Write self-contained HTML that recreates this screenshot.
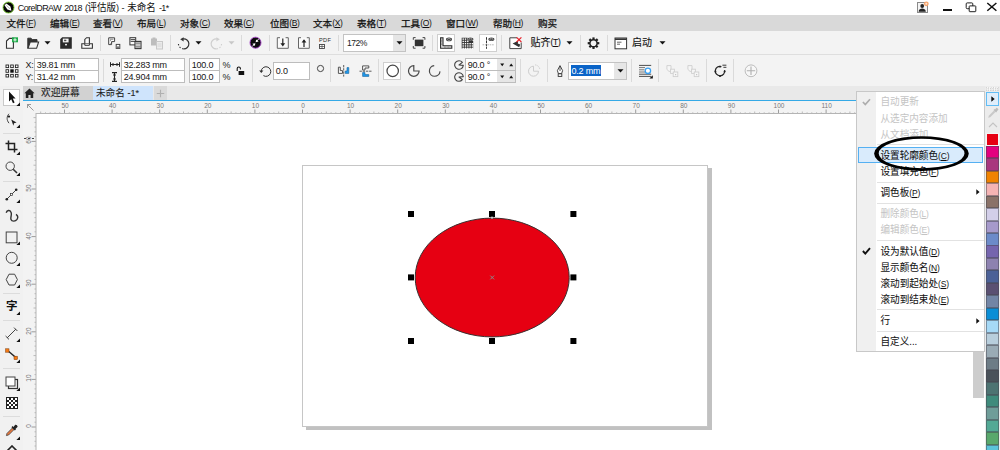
<!DOCTYPE html>
<html lang="zh-CN">
<head>
<meta charset="utf-8">
<title>CorelDRAW 2018</title>
<style>
*{box-sizing:border-box;margin:0;padding:0}
html,body{width:1000px;height:450px;overflow:hidden;background:#fff}
body{position:relative;font-family:"Liberation Sans","Noto Sans CJK SC",sans-serif;font-size:10px;color:#111;line-height:1}
.abs{position:absolute}
.t{position:absolute;white-space:nowrap;line-height:1}
#titlebar{left:0;top:0;width:1000px;height:15px;background:#fff}
#menubar{left:0;top:15px;width:1000px;height:16px;background:#d9d9d9}
#toolbar{left:0;top:31px;width:1000px;height:24px;background:#f3f3f3;border-bottom:1px solid #dedede}
#propbar{left:0;top:55px;width:1000px;height:31px;background:#f3f3f3}
#tabbar{left:0;top:86px;width:1000px;height:15px;background:#e9e9e9}
#toolbox{left:0;top:86px;width:23px;height:364px;background:#f1f1f1}
#hruler{left:23px;top:101px;width:963px;height:12px;background:#f3f3f3}
#vruler{left:23px;top:101px;width:13px;height:349px;background:#f3f3f3}
#canvas{left:36px;top:113px;width:951px;height:338px;background:#fff}
.cj{font-size:9.5px;letter-spacing:0}
.mi{position:absolute;top:18.6px;margin-left:0;-webkit-text-stroke:.25px #111;font-size:9.6px;white-space:nowrap;line-height:1}
.mi u{-webkit-text-stroke:0;font-size:8.5px;text-decoration:none;letter-spacing:-0.3px;position:relative;top:-.3px}
.mi u b{font-weight:normal;text-decoration:underline}
.sep{position:absolute;width:1px;background:#dadada}
.inp{position:absolute;background:#fff;border:1px solid #bdbdbd;font-size:10px;line-height:1;white-space:nowrap;color:#222}
.inp span{position:absolute;left:1.7px;top:1.7px;font-size:9px;letter-spacing:-.2px;color:#151515}
.pl{font-size:9px;color:#1a1a1a;letter-spacing:-.2px}
.rn{position:absolute;top:102.8px;font-size:6.5px;color:#777;width:20px;text-align:center;line-height:1}
.vn{position:absolute;left:26.1px;font-size:6.5px;color:#777;width:20px;height:8px;text-align:center;line-height:1;transform-origin:0 0;transform:rotate(-90deg)}
.hd{position:absolute;width:5px;height:5px;background:#000}
.cm{position:absolute;left:880.5px;margin-top:1.2px;transform:scaleY(1.06);transform-origin:0 100%;font-size:9.6px;white-space:nowrap;line-height:1;color:#111}
.cm{-webkit-text-stroke:.06px #111}
.cm.dis{color:#c4c4c4;-webkit-text-stroke:0}
.cm u{-webkit-text-stroke:0}
.cm u{font-size:8.5px;text-decoration:none;letter-spacing:-.2px;position:relative;top:-.3px}
.cm u b{font-weight:normal;text-decoration:underline}
.cms{position:absolute;left:877px;width:107px;height:1px;background:#e2e2e2}
.sw{position:absolute;left:986.4px;width:12.4px;border:1px solid rgba(70,70,80,.5);border-top-width:.6px;border-bottom-width:.6px}
.sw.first{border-color:#f4f4f4}
</style>
</head>
<body>
<div class="abs" id="titlebar"></div>
<div class="abs" id="menubar"></div>
<div class="abs" id="toolbar"></div>
<div class="abs" id="propbar"></div>
<div class="abs" id="tabbar"></div>
<div class="abs" id="hruler"></div>
<div class="abs" id="vruler"></div>
<div class="abs" id="canvas"></div>
<div class="abs" id="toolbox"></div>

<!-- TITLE -->
<svg class="abs" style="left:1.6px;top:.7px" width="13" height="13" viewBox="0 0 13 13"><circle cx="6.5" cy="6.5" r="5.5" fill="#050505" stroke="#7bd02c" stroke-width=".9"/><path d="M2.5 4.3 L4.4 2.5 L8.4 5.6 L9.4 9.7 L5.4 8.5 Z" fill="#fff"/><path d="M4.4 4.4 L8 7.8" stroke="#999" stroke-width=".7"/></svg>
<div class="t" id="title" style="left:17.8px;top:2.5px;transform:scaleY(1.1);transform-origin:0 90%;font-size:9px;letter-spacing:-0.6px;word-spacing:1.3px">CorelDRAW 2018 (<span class="cj">评估版</span>) - <span class="cj">未命名</span> -1*</div>


<!-- window controls -->
<svg class="abs" style="left:916px;top:1px" width="14" height="13" viewBox="0 0 14 13"><rect x="1.5" y="1.5" width="10" height="10" fill="#f4f4f4" stroke="#8a8a8a" stroke-width="1"/><circle cx="6.2" cy="5" r="1.9" fill="#222"/><path d="M2.6 10.8 C2.8 8.2 4.6 7.6 6.2 7.6 C7.8 7.6 9.6 8.2 9.8 10.8 Z" fill="#222"/><circle cx="10.3" cy="2.8" r="2.4" fill="#f6a46c"/><circle cx="10.3" cy="2.8" r="1" fill="#fde3cf"/></svg>
<div class="abs" style="left:943px;top:8.5px;width:8.5px;height:2.2px;background:#111"></div>
<svg class="abs" style="left:965px;top:2px" width="12" height="11" viewBox="0 0 12 11"><rect x="1.2" y=".9" width="6.6" height="5.8" rx="1" fill="#fff" stroke="#222" stroke-width="1"/><rect x="4.2" y="3.9" width="6.6" height="5.8" rx=".6" fill="#fff" stroke="#222" stroke-width="1"/></svg>
<svg class="abs" style="left:986px;top:2px" width="12" height="10" viewBox="0 0 12 10"><path d="M1.3 1L10.4 8.8M10.4 1L1.3 8.8" stroke="#111" stroke-width="1.5"/></svg>
<!-- MENU -->
<div class="mi" style="left:6.5px">文件<u>(<b>F</b>)</u></div>
<div class="mi" style="left:50px">编辑<u>(<b>E</b>)</u></div>
<div class="mi" style="left:93px">查看<u>(<b>V</b>)</u></div>
<div class="mi" style="left:137px">布局<u>(<b>L</b>)</u></div>
<div class="mi" style="left:180px">对象<u>(<b>C</b>)</u></div>
<div class="mi" style="left:224px">效果<u>(<b>C</b>)</u></div>
<div class="mi" style="left:270px">位图<u>(<b>B</b>)</u></div>
<div class="mi" style="left:313px">文本<u>(<b>X</b>)</u></div>
<div class="mi" style="left:357px">表格<u>(<b>T</b>)</u></div>
<div class="mi" style="left:401px">工具<u>(<b>O</b>)</u></div>
<div class="mi" style="left:446px">窗口<u>(<b>W</b>)</u></div>
<div class="mi" style="left:493px">帮助<u>(<b>H</b>)</u></div>
<div class="mi" style="left:538px">购买</div>

<!-- TOOLBAR_ICONS -->
<!-- new -->
<svg class="abs" style="left:5px;top:37px" width="14" height="13" viewBox="0 0 14 13"><path d="M1.5 4 L4.4 1.4 H8.4 V11.3 H1.5 Z" fill="#fafafa" stroke="#333" stroke-width="1.1"/><rect x="7" y=".3" width="6" height="5" fill="#1fa84a"/><path d="M10 1.2v3.2M8.4 2.8h3.2" stroke="#d8f0dc" stroke-width="1.2"/></svg>
<!-- open -->
<svg class="abs" style="left:26px;top:37px" width="14" height="13" viewBox="0 0 14 13"><path d="M1.8 11.3 V1.2 H5 L6.3 2.6 H11 V5" fill="#333" stroke="#333" stroke-width="1"/><path d="M2 11.3 L4.2 5 H12.6 L10.6 11.3 Z" fill="#f6f6f6" stroke="#333" stroke-width="1.1"/></svg>
<svg class="abs" style="left:44px;top:41px" width="7" height="4" viewBox="0 0 7 4"><path d="M.5 .3 H6.5 L3.5 3.6 Z" fill="#111"/></svg>
<!-- save -->
<svg class="abs" style="left:60px;top:37px" width="13" height="13" viewBox="0 0 13 13"><path d="M2.2 .3 H11.8 V11.8 H.2 V2.3 Z" fill="#2b2b2b"/><rect x="2.8" y="1.6" width="5.8" height="3.8" fill="#f3f3f3"/><path d="M4.2 3.4H6.4M5 2.6V4.4" stroke="#2b2b2b" stroke-width=".8"/><rect x="5.1" y="6.9" width="1.8" height="1.5" fill="#f3f3f3"/></svg>
<!-- print -->
<svg class="abs" style="left:80px;top:37px" width="14" height="13" viewBox="0 0 14 13"><path d="M4.8 7 V2.4 L6.6 .7 H9.4 V7" fill="#fafafa" stroke="#333" stroke-width="1.1"/><path d="M1.8 6.8 H12.4 V11.3 H1.8 Z" fill="#fafafa" stroke="#333" stroke-width="1.1"/><path d="M4.8 6.8V8.3H9.4V6.8" fill="#f3f3f3" stroke="#333" stroke-width="1"/></svg>
<div class="sep" style="left:100px;top:35px;height:16px"></div>
<!-- cut -->
<svg class="abs" style="left:107px;top:37px" width="14" height="13" viewBox="0 0 14 13"><path d="M1.7 .8 H7.6 V4.6 H4.6 V7.6 H1.7 Z" fill="#fafafa" stroke="#444" stroke-width="1"/><path d="M3 2.3h3.4M3 3.6h1" stroke="#777" stroke-width=".8"/><path d="M3.6 6.6L4.6 5.6" stroke="#444" stroke-width=".8"/><rect x="9.2" y="7.4" width="3.6" height="4" fill="#fafafa" stroke="#444" stroke-width="1"/><rect x="10" y="9.4" width="2" height="1.6" fill="#777"/></svg>
<!-- copy -->
<svg class="abs" style="left:128px;top:37px" width="14" height="13" viewBox="0 0 14 13"><rect x="1.9" y=".7" width="5.8" height="7.2" fill="#fafafa" stroke="#333" stroke-width="1"/><path d="M2.6 2.6h4.4M2.6 4.4h4.4" stroke="#444" stroke-width="1"/><rect x="7" y="4.4" width="6" height="7.2" fill="#fafafa" stroke="#333" stroke-width="1.1"/><path d="M7.6 6.2h5M7.6 9.8h5M9 5v6.4M11 5v6.4" stroke="#666" stroke-width=".7"/></svg>
<!-- paste disabled -->
<svg class="abs" style="left:150px;top:37px" width="14" height="13" viewBox="0 0 14 13"><rect x="1" y="1.5" width="6" height="7" fill="#bdbdbd"/><rect x="2.5" y=".5" width="3" height="2" fill="#bdbdbd"/><rect x="6.5" y="4.5" width="6" height="7.5" fill="#ececec" stroke="#c8c8c8" stroke-width="1"/><path d="M7.5 7h4M7.5 9h4" stroke="#d0d0d0" stroke-width=".8"/></svg>
<div class="sep" style="left:170px;top:35px;height:16px"></div>
<!-- undo -->
<svg class="abs" style="left:177px;top:37px" width="13" height="13" viewBox="0 0 13 13"><path d="M6 1.9 A5 5 0 1 1 6.4 11.8" fill="none" stroke="#333" stroke-width="1.2"/><path d="M6.4 11.8 A5 5 0 0 1 1.6 5.6" fill="none" stroke="#333" stroke-width="1.1" stroke-dasharray="1.3 1.7"/><path d="M3.2 2.3 L6.6 .2 V4.6 Z" fill="#333"/></svg>
<svg class="abs" style="left:195px;top:41px" width="7" height="4" viewBox="0 0 7 4"><path d="M.5 .3 H6.5 L3.5 3.6 Z" fill="#111"/></svg>
<!-- redo disabled -->
<svg class="abs" style="left:210px;top:37px" width="13" height="13" viewBox="0 0 13 13"><path d="M7 1.9 A5 5 0 1 0 6.6 11.8" fill="none" stroke="#cfcfcf" stroke-width="1.2"/><path d="M6.6 11.8 A5 5 0 0 0 11.4 5.6" fill="none" stroke="#cfcfcf" stroke-width="1.1" stroke-dasharray="1.3 1.7"/><path d="M9.8 2.3 L6.4 .2 V4.6 Z" fill="#cfcfcf"/></svg>
<svg class="abs" style="left:228px;top:41px" width="7" height="4" viewBox="0 0 7 4"><path d="M.5 .3 H6.5 L3.5 3.6 Z" fill="#c8c8c8"/></svg>
<div class="sep" style="left:241px;top:35px;height:16px"></div>
<!-- search content -->
<svg class="abs" style="left:249px;top:36px" width="13" height="13" viewBox="0 0 13 13"><circle cx="6.5" cy="6.7" r="5.5" fill="#0c0c0c" stroke="#a23cc4" stroke-width=".9"/><path d="M10 3.2 L8.6 4.6 L9.6 5.6 L6.6 6.2 L7.2 3.4 L8 4.2 L9.4 2.8 Z M3 10.2 L4.4 8.8 L3.4 7.8 L6.4 7.2 L5.8 10 L5 9.2 L3.6 10.6 Z" fill="#fff"/></svg>
<div class="sep" style="left:269px;top:35px;height:16px"></div>
<!-- import -->
<svg class="abs" style="left:276px;top:37px" width="14" height="13" viewBox="0 0 14 13"><path d="M4 .7 H1.3 V11.3 H12.3 V.7 H9.6" fill="#fafafa" stroke="#666" stroke-width="1"/><path d="M6.8 1.5 V8" stroke="#222" stroke-width="1.2"/><path d="M4.4 6.2 H9.2 L6.8 9.4 Z" fill="#222"/></svg>
<!-- export -->
<svg class="abs" style="left:297px;top:37px" width="14" height="13" viewBox="0 0 14 13"><path d="M4 .7 H1.5 V11.3 H12.3 V.7 H9.8" fill="#fafafa" stroke="#666" stroke-width="1"/><path d="M7 10 V3.6" stroke="#222" stroke-width="1.2"/><path d="M4.6 5.6 H9.4 L7 2.2 Z" fill="#222"/></svg>
<!-- pdf -->
<div class="t" style="left:319px;top:38px;font-size:5.6px;color:#2a2a2a;letter-spacing:.35px">PDF</div>
<svg class="abs" style="left:319px;top:44px" width="6" height="5" viewBox="0 0 6 5"><rect x=".5" y=".5" width="5" height="4" fill="#fff" stroke="#444" stroke-width=".9"/><path d="M3 .5v4M.5 2.5h5" stroke="#444" stroke-width=".7"/></svg>
<div class="sep" style="left:338px;top:35px;height:16px"></div>
<!-- zoom combo -->
<div class="abs" style="left:343px;top:34px;width:63px;height:18px;background:#fff;border:1px solid #c3c3c3"></div>
<div class="abs" style="left:393px;top:35px;width:12px;height:16px;background:#e6e6e6"></div>
<div class="t" style="left:347px;top:39px;font-size:8.6px;letter-spacing:-.5px;color:#222">172%</div>
<svg class="abs" style="left:396px;top:41px" width="7" height="4" viewBox="0 0 7 4"><path d="M.5 .3 H6.5 L3.5 3.6 Z" fill="#111"/></svg>
<!-- fullscreen -->
<svg class="abs" style="left:412px;top:37px" width="14" height="13" viewBox="0 0 14 13"><rect x="2.8" y="2.6" width="8.6" height="6.6" fill="#333"/><path d="M1.3 2.8V.6H3.6 M10.6 .6H12.9V2.8 M12.9 9V11.2H10.6 M3.6 11.2H1.3V9" fill="none" stroke="#444" stroke-width="1"/></svg>
<div class="sep" style="left:432px;top:35px;height:16px"></div>
<!-- rulers btn -->
<div class="abs" style="left:437px;top:34px;width:18px;height:18px;background:#fff;border:1px solid #cfcfcf"></div>
<svg class="abs" style="left:440px;top:37px" width="13" height="13" viewBox="0 0 13 13"><path d="M.6 .8 H3 V8.8 H11.8 V11.3 H.6 Z" fill="#e8e8e8" stroke="#2a2a2a" stroke-width="1.1"/><path d="M4 10.1h7" stroke="#555" stroke-width=".9" stroke-dasharray=".7 .7"/><path d="M1.8 1.6v7" stroke="#555" stroke-width=".9" stroke-dasharray=".7 .7"/><ellipse cx="9" cy="2.4" rx="3" ry="1.8" fill="#3a3a3a"/><ellipse cx="9" cy="2.4" rx="1.7" ry="1" fill="none" stroke="#ddd" stroke-width=".5"/></svg>
<!-- grid -->
<svg class="abs" style="left:461px;top:37px" width="13" height="13" viewBox="0 0 13 13"><path d="M.7 .7H6.6V4H12.2V11.4H.7Z" fill="#333"/><rect x="1.5" y="1.4" width="1.4" height="1.4" fill="#fff"/><rect x="1.5" y="3.7" width="1.4" height="1.4" fill="#fff"/><rect x="1.5" y="6.0" width="1.4" height="1.4" fill="#fff"/><rect x="1.5" y="8.3" width="1.4" height="1.4" fill="#fff"/><rect x="1.5" y="10.6" width="1.4" height="1.4" fill="#fff"/><rect x="3.8" y="1.4" width="1.4" height="1.4" fill="#fff"/><rect x="3.8" y="3.7" width="1.4" height="1.4" fill="#fff"/><rect x="3.8" y="6.0" width="1.4" height="1.4" fill="#fff"/><rect x="3.8" y="8.3" width="1.4" height="1.4" fill="#fff"/><rect x="3.8" y="10.6" width="1.4" height="1.4" fill="#fff"/><rect x="6.1" y="1.4" width="1.4" height="1.4" fill="#fff"/><rect x="6.1" y="3.7" width="1.4" height="1.4" fill="#fff"/><rect x="6.1" y="6.0" width="1.4" height="1.4" fill="#fff"/><rect x="6.1" y="8.3" width="1.4" height="1.4" fill="#fff"/><rect x="6.1" y="10.6" width="1.4" height="1.4" fill="#fff"/><rect x="8.4" y="6.0" width="1.4" height="1.4" fill="#fff"/><rect x="8.4" y="8.3" width="1.4" height="1.4" fill="#fff"/><rect x="8.4" y="10.6" width="1.4" height="1.4" fill="#fff"/><rect x="10.7" y="6.0" width="1.4" height="1.4" fill="#fff"/><rect x="10.7" y="8.3" width="1.4" height="1.4" fill="#fff"/><rect x="10.7" y="10.6" width="1.4" height="1.4" fill="#fff"/><ellipse cx="9.4" cy="2.2" rx="3" ry="1.8" fill="#3a3a3a"/><ellipse cx="9.4" cy="2.2" rx="1.7" ry="1" fill="none" stroke="#ddd" stroke-width=".5"/></svg>
<!-- guidelines btn -->
<div class="abs" style="left:479px;top:34px;width:18px;height:18px;background:#fff;border:1px solid #cfcfcf"></div>
<svg class="abs" style="left:482px;top:37px" width="13" height="13" viewBox="0 0 13 13"><path d="M4.5 .2V11.8" stroke="#333" stroke-width="1" stroke-dasharray="2.6 .7"/><path d="M.5 7.8H12.5" stroke="#b5b5b5" stroke-width="1" stroke-dasharray="1.6 .8"/><ellipse cx="9.4" cy="2.2" rx="3" ry="1.8" fill="#3a3a3a"/><ellipse cx="9.4" cy="2.2" rx="1.7" ry="1" fill="none" stroke="#ddd" stroke-width=".5"/></svg>
<div class="sep" style="left:501px;top:35px;height:16px"></div>
<!-- snap off -->
<svg class="abs" style="left:509px;top:36px" width="14" height="14" viewBox="0 0 14 14"><path d="M8 1.8H.8V12.6H12.2V6.5" fill="#fff" stroke="#444" stroke-width="1"/><path d="M3.6 7.6 L9.2 4.8 L8.8 7.4 L11.2 8.4 L10.2 11.2 Z" fill="#333"/><path d="M7.6 1.4 L12.4 6 M12.4 1.4 L7.6 6" stroke="#e8222a" stroke-width="1.2"/></svg>
<div class="t" style="left:530.5px;top:37.5px;font-size:10px;-webkit-text-stroke:.1px #111">贴齐<span style="font-size:8.5px;letter-spacing:-.3px;position:relative;top:-.4px">(<span style="text-decoration:underline">T</span>)</span></div>
<svg class="abs" style="left:566px;top:41px" width="7" height="4" viewBox="0 0 7 4"><path d="M.5 .3 H6.5 L3.5 3.6 Z" fill="#111"/></svg>
<div class="sep" style="left:580px;top:35px;height:16px"></div>
<!-- gear -->
<svg class="abs" style="left:587px;top:37px" width="13" height="13" viewBox="0 0 13 13"><g transform="translate(6.5 6.2)"><g fill="#222"><rect x="-1.1" y="-5.8" width="2.2" height="11.6"/><rect x="-1.1" y="-5.8" width="2.2" height="11.6" transform="rotate(45)"/><rect x="-1.1" y="-5.8" width="2.2" height="11.6" transform="rotate(90)"/><rect x="-1.1" y="-5.8" width="2.2" height="11.6" transform="rotate(135)"/></g><circle r="4.3" fill="#222"/><circle r="2.8" fill="#f3f3f3"/></g></svg>
<div class="sep" style="left:607px;top:35px;height:16px"></div>
<!-- launch -->
<svg class="abs" style="left:614px;top:37px" width="14" height="13" viewBox="0 0 14 13"><rect x="1" y="1" width="11.6" height="10.8" fill="#fff" stroke="#333" stroke-width="1"/><path d="M1 2.2H12.6" stroke="#333" stroke-width="1.6"/><path d="M3 5.2h4.5M3 7.2h3" stroke="#555" stroke-width=".9"/></svg>
<div class="t" style="left:632px;top:37.8px;font-size:10px;-webkit-text-stroke:.1px #111">启动</div>
<svg class="abs" style="left:659px;top:41px" width="7" height="4" viewBox="0 0 7 4"><path d="M.5 .3 H6.5 L3.5 3.6 Z" fill="#111"/></svg>


<!-- PROPBAR -->
<!-- origin icon -->
<svg class="abs" style="left:5px;top:64px" width="14" height="14" viewBox="0 0 14 14"><g fill="#fff" stroke="#222" stroke-width=".9"><rect x="1" y="1" width="2.6" height="2.6"/><rect x="5.7" y="1" width="2.6" height="2.6"/><rect x="10.4" y="1" width="2.6" height="2.6"/><rect x="1" y="5.7" width="2.6" height="2.6"/><rect x="10.4" y="5.7" width="2.6" height="2.6"/><rect x="1" y="10.4" width="2.6" height="2.6"/><rect x="5.7" y="10.4" width="2.6" height="2.6"/><rect x="10.4" y="10.4" width="2.6" height="2.6"/></g><rect x="5.3" y="5.3" width="3.4" height="3.4" fill="#111"/></svg>
<div class="t pl" style="left:25.5px;top:61px">X:</div>
<div class="t pl" style="left:25.5px;top:72.5px">Y:</div>
<div class="inp" style="left:34px;top:58px;width:65px;height:13px"><span>39.81 mm</span></div>
<div class="inp" style="left:34px;top:70px;width:65px;height:13px"><span>31.42 mm</span></div>
<div class="sep" style="left:103px;top:59px;height:23px"></div>
<svg class="abs" style="left:110px;top:61px" width="10" height="7" viewBox="0 0 10 7"><path d="M.5 1.2V5.8M9.5 1.2V5.8M.5 3.5H9.5" stroke="#222" stroke-width="1"/><path d="M3 2v3M7 2v3" stroke="#222" stroke-width="1"/></svg>
<svg class="abs" style="left:111px;top:72px" width="7" height="10" viewBox="0 0 7 10"><path d="M1 .6H6M1 9.4H6M3.5 .6V9.4" stroke="#222" stroke-width="1.1"/><path d="M2 3h3M2 7h3" stroke="#222" stroke-width=".9"/></svg>
<div class="inp" style="left:121px;top:58px;width:64px;height:13px"><span>32.283 mm</span></div>
<div class="inp" style="left:121px;top:70px;width:64px;height:13px"><span>24.904 mm</span></div>
<div class="inp" style="left:189px;top:58px;width:31px;height:13px"><span>100.0</span></div>
<div class="inp" style="left:189px;top:70px;width:31px;height:13px"><span>100.0</span></div>
<div class="t pl" style="left:222.5px;top:61px">%</div>
<div class="t pl" style="left:222.5px;top:72.5px">%</div>
<!-- lock -->
<svg class="abs" style="left:236px;top:66px" width="9" height="10" viewBox="0 0 9 10"><path d="M1.2 5V2.6A1.6 1.6 0 0 1 4.4 2.6V3.4" fill="none" stroke="#111" stroke-width="1.1"/><rect x="2.6" y="5" width="5.6" height="4" fill="#111"/></svg>
<div class="sep" style="left:252px;top:59px;height:23px"></div>
<!-- rotate -->
<svg class="abs" style="left:259px;top:65px" width="13" height="13" viewBox="0 0 13 13"><path d="M2.2 6.2 A4.8 4.8 0 1 1 4.4 10.6" fill="none" stroke="#333" stroke-width="1"/><path d="M.2 5.4 H4.4 L2.3 8 Z" fill="#333"/></svg>
<div class="inp" style="left:273px;top:62px;width:37px;height:18px"><span style="top:4.2px;left:1.8px">0.0</span></div>
<svg class="abs" style="left:316px;top:64px" width="9" height="9" viewBox="0 0 9 9"><circle cx="4.5" cy="4.5" r="3.1" fill="none" stroke="#444" stroke-width="1"/></svg>
<div class="sep" style="left:330px;top:59px;height:23px"></div>
<!-- mirror h -->
<svg class="abs" style="left:337px;top:64px" width="13" height="14" viewBox="0 0 13 14"><path d="M1.4 3.2H3.3V6.6H5.5V9.4H1.4Z" fill="#fafafa" stroke="#444" stroke-width=".9"/><path d="M11.8 3.6H10V7H8.2V9.4H11.8Z" fill="#1e9bf0" stroke="#1a5f96" stroke-width=".6"/><path d="M6.7 1V12.6" stroke="#333" stroke-width=".8" stroke-dasharray="2.4 .8"/></svg>
<!-- mirror v -->
<svg class="abs" style="left:359px;top:64px" width="13" height="14" viewBox="0 0 13 14"><path d="M3.6 1.9H9.8V4H6V6H3.6Z" fill="#fafafa" stroke="#444" stroke-width=".9"/><path d="M3.6 12.4H9.8V10.6H6V8.6H3.6Z" fill="#1e9bf0" stroke="#1a5f96" stroke-width=".6"/><path d="M.5 7.2H12.5" stroke="#333" stroke-width=".8" stroke-dasharray="2.4 .8"/></svg>
<div class="sep" style="left:378px;top:59px;height:23px"></div>
<!-- ellipse btn -->
<div class="abs" style="left:383px;top:62px;width:18px;height:18px;background:#fff;border:1px solid #cfcfcf"></div>
<svg class="abs" style="left:385px;top:64px" width="15" height="14" viewBox="0 0 15 14"><circle cx="7.7" cy="6.9" r="5.7" fill="#fff" stroke="#444" stroke-width="1.2"/></svg>
<!-- pie -->
<svg class="abs" style="left:407px;top:64px" width="14" height="14" viewBox="0 0 14 14"><path d="M6.8 1.7 A5.3 5.3 0 1 0 12.1 7 H6.8 Z" fill="none" stroke="#4a4a4a" stroke-width="1.2"/></svg>
<!-- arc -->
<svg class="abs" style="left:428px;top:64px" width="14" height="14" viewBox="0 0 14 14"><path d="M6.2 1.7 A5.3 5.3 0 1 0 12 7.4" fill="none" stroke="#4a4a4a" stroke-width="1.2"/></svg>
<div class="sep" style="left:448px;top:59px;height:23px"></div>
<!-- start/end angle icons -->
<svg class="abs" style="left:454px;top:59.5px" width="11" height="10" viewBox="0 0 11 10"><path d="M5 5L9.28 5.37A4.3 4.3 0 1 1 8.39 2.35Z" fill="none" stroke="#444" stroke-width="1.1" stroke-linejoin="round"/></svg>
<svg class="abs" style="left:454px;top:71.5px" width="11" height="10" viewBox="0 0 11 10"><path d="M5 5L8.39 7.65A4.3 4.3 0 1 1 9.28 4.63Z" fill="none" stroke="#444" stroke-width="1.1" stroke-linejoin="round"/></svg>
<div class="inp" style="left:465px;top:58px;width:51px;height:13px"><span>90.0 °</span></div>
<div class="inp" style="left:465px;top:70px;width:51px;height:13px"><span>90.0 °</span></div>
<div class="abs" style="left:497px;top:59px;width:18px;height:11px;background:#e6e6e6"></div>
<div class="abs" style="left:497px;top:71px;width:18px;height:11px;background:#e6e6e6"></div>
<svg class="abs" style="left:500px;top:63px" width="14" height="4" viewBox="0 0 14 4"><path d="M.2 .5H4.2L2.2 3.2Z M9.2 3.2H13.2L11.2 .5Z" fill="#111"/></svg>
<svg class="abs" style="left:500px;top:75px" width="14" height="4" viewBox="0 0 14 4"><path d="M.2 .5H4.2L2.2 3.2Z M9.2 3.2H13.2L11.2 .5Z" fill="#111"/></svg>
<div class="sep" style="left:520px;top:59px;height:23px"></div>
<!-- disabled pie -->
<svg class="abs" style="left:527px;top:64px" width="14" height="14" viewBox="0 0 14 14"><path d="M6.5 2.2 A5 5 0 1 0 11.5 7.2 H6.5 Z" fill="none" stroke="#cdcdcd" stroke-width="1"/><path d="M8 .9 A5 5 0 0 1 12.8 5.6" fill="none" stroke="#cdcdcd" stroke-width="1" stroke-dasharray="1.5 1"/></svg>
<div class="sep" style="left:547px;top:59px;height:23px"></div>
<!-- pen nib -->
<svg class="abs" style="left:556px;top:65px" width="8" height="12" viewBox="0 0 8 12"><path d="M4 .6 L6.6 5.6 L5.6 8.6 H2.4 L1.4 5.6 Z" fill="#fff" stroke="#333" stroke-width=".9"/><path d="M4 1.5V6" stroke="#333" stroke-width=".8"/><rect x="2.2" y="8.8" width="3.6" height="2.6" fill="#fff" stroke="#333" stroke-width=".9"/></svg>
<!-- outline width combo -->
<div class="abs" style="left:568px;top:62px;width:59px;height:18px;background:#fff;border:1px solid #c3c3c3"></div>
<div class="abs" style="left:614px;top:63px;width:12px;height:16px;background:#e6e6e6"></div>
<div class="abs" style="left:571px;top:65px;width:30px;height:11px;background:#0a64c8"></div>
<div class="t" style="left:571.5px;top:66.5px;font-size:9px;letter-spacing:-.2px;color:#fff">0.2 mm</div>
<svg class="abs" style="left:616.5px;top:69px" width="7" height="4" viewBox="0 0 7 4"><path d="M.5 .3 H6.5 L3.5 3.6 Z" fill="#111"/></svg>
<div class="sep" style="left:631px;top:59px;height:23px"></div>
<!-- wrap text -->
<svg class="abs" style="left:638px;top:64px" width="16" height="16" viewBox="0 0 16 16"><path d="M1 1.4H13.2M1 10.2H13.2M1 12.4H13.2" stroke="#3a3a3a" stroke-width=".9"/><path d="M1 3.6H7M1 5.8H6.4M1 8H7" stroke="#777" stroke-width="1"/><circle cx="9.9" cy="6.8" r="2.7" fill="#fff" stroke="#3aa0f0" stroke-width="1.3"/><path d="M14.8 11.2V14.6H11.4Z" fill="#111"/></svg>
<div class="sep" style="left:658px;top:59px;height:23px"></div>
<!-- disabled order icons -->
<svg class="abs" style="left:666px;top:64px" width="13" height="14" viewBox="0 0 13 14"><path d="M.9 1.6H5V7.4H3L.9 5.4Z" fill="#f6f6f6" stroke="#cfcfcf" stroke-width=".9"/><rect x="4.6" y="5.2" width="3.8" height="4.2" fill="#f6f6f6" stroke="#cfcfcf" stroke-width=".9"/><rect x="7.2" y="8" width="4.6" height="4.6" fill="#f6f6f6" stroke="#cfcfcf" stroke-width=".9"/><rect x="9" y="10" width="1.2" height="1.2" fill="#c4c4c4"/></svg>
<svg class="abs" style="left:687px;top:64px" width="13" height="14" viewBox="0 0 13 14"><path d="M.9 1.6H5V7.4H3L.9 5.4Z" fill="#f6f6f6" stroke="#cfcfcf" stroke-width=".9"/><rect x="4.6" y="5.2" width="3.8" height="4.2" fill="#f6f6f6" stroke="#cfcfcf" stroke-width=".9"/><rect x="7.2" y="8" width="4.6" height="4.6" fill="#f6f6f6" stroke="#cfcfcf" stroke-width=".9"/><rect x="9" y="10" width="1.2" height="1.2" fill="#c4c4c4"/></svg>
<div class="sep" style="left:706px;top:59px;height:23px"></div>
<!-- convert to curves -->
<svg class="abs" style="left:714px;top:64px" width="13" height="14" viewBox="0 0 13 14"><path d="M7.4 2.6 A4.7 4.7 0 1 0 10.6 6.2" fill="none" stroke="#222" stroke-width="1.2"/><circle cx="6" cy="12" r="1" fill="#222"/><circle cx="1.4" cy="7.4" r="1" fill="#222"/><circle cx="10.6" cy="7.4" r="1" fill="#222"/><circle cx="6" cy="2.7" r=".9" fill="#222"/><path d="M8.4 1.2H12.4M9.4 3.3H12.4" stroke="#222" stroke-width=".9"/></svg>
<div class="sep" style="left:733.4px;top:59px;height:23px"></div>
<!-- plus circle -->
<svg class="abs" style="left:744px;top:64px" width="14" height="14" viewBox="0 0 14 14"><circle cx="7" cy="6.8" r="5.9" fill="#f7f7f7" stroke="#b5b5b5" stroke-width=".9"/><path d="M7 2.6V11M2.8 6.8H11.2" stroke="#b0b0b0" stroke-width="1.1"/></svg>


<!-- TABS -->
<div class="abs" style="left:23px;top:86px;width:70px;height:14px;background:#d2d2d2"></div>
<div class="abs" style="left:93px;top:86px;width:60px;height:14px;background:#cfe4fc"></div>
<div class="abs" style="left:153.8px;top:86px;width:13.7px;height:14px;background:#dadada"></div>
<div class="abs" style="left:23px;top:100px;width:834px;height:1px;background:#35a9e6"></div>
<svg class="abs" style="left:24.4px;top:87.8px" width="11" height="10.6" viewBox="0 0 11 10"><path d="M5.5 .3 L10.6 5 H9.2 V9.8 H6.6 V6.6 H4.4 V9.8 H1.8 V5 H.4 Z" fill="#222"/></svg>
<div class="t" style="left:41px;top:88.3px;font-size:9.7px;color:#222;-webkit-text-stroke:.1px #222">欢迎屏幕</div>
<div class="t" style="left:96px;top:88.3px;font-size:9.6px;color:#222;-webkit-text-stroke:.1px #222">未命名 <span style="font-size:9px">-1*</span></div>
<svg class="abs" style="left:156.1px;top:88.5px" width="9" height="9" viewBox="0 0 9 9"><path d="M4.5 .8V8.2M.8 4.5H8.2" stroke="#b0b0b0" stroke-width="1.1"/></svg>


<!-- RULERS -->
<svg class="abs" style="left:0px;top:101px" width="986" height="13" viewBox="0 0 986 13"><path d="M64.5 8.5V12.5M112.1 8.5V12.5M159.7 8.5V12.5M207.3 8.5V12.5M254.9 8.5V12.5M302.5 8.5V12.5M350.1 8.5V12.5M397.7 8.5V12.5M445.3 8.5V12.5M492.9 8.5V12.5M540.5 8.5V12.5M588.1 8.5V12.5M635.7 8.5V12.5M683.3 8.5V12.5M730.9 8.5V12.5M778.5 8.5V12.5M826.1 8.5V12.5M873.7 8.5V12.5M921.3 8.5V12.5M968.9 8.5V12.5" stroke="#9c9c9c" stroke-width="1" fill="none"/><path d="M40.7 10.5V12.5M45.5 11.3V12.5M50.2 11.3V12.5M55.0 11.3V12.5M59.7 11.3V12.5M69.3 11.3V12.5M74.0 11.3V12.5M78.8 11.3V12.5M83.5 11.3V12.5M88.3 10.5V12.5M93.1 11.3V12.5M97.8 11.3V12.5M102.6 11.3V12.5M107.3 11.3V12.5M116.9 11.3V12.5M121.6 11.3V12.5M126.4 11.3V12.5M131.1 11.3V12.5M135.9 10.5V12.5M140.7 11.3V12.5M145.4 11.3V12.5M150.2 11.3V12.5M154.9 11.3V12.5M164.5 11.3V12.5M169.2 11.3V12.5M174.0 11.3V12.5M178.7 11.3V12.5M183.5 10.5V12.5M188.3 11.3V12.5M193.0 11.3V12.5M197.8 11.3V12.5M202.5 11.3V12.5M212.1 11.3V12.5M216.8 11.3V12.5M221.6 11.3V12.5M226.3 11.3V12.5M231.1 10.5V12.5M235.9 11.3V12.5M240.6 11.3V12.5M245.4 11.3V12.5M250.1 11.3V12.5M259.7 11.3V12.5M264.4 11.3V12.5M269.2 11.3V12.5M273.9 11.3V12.5M278.7 10.5V12.5M283.5 11.3V12.5M288.2 11.3V12.5M293.0 11.3V12.5M297.7 11.3V12.5M307.3 11.3V12.5M312.0 11.3V12.5M316.8 11.3V12.5M321.5 11.3V12.5M326.3 10.5V12.5M331.1 11.3V12.5M335.8 11.3V12.5M340.6 11.3V12.5M345.3 11.3V12.5M354.9 11.3V12.5M359.6 11.3V12.5M364.4 11.3V12.5M369.1 11.3V12.5M373.9 10.5V12.5M378.7 11.3V12.5M383.4 11.3V12.5M388.2 11.3V12.5M392.9 11.3V12.5M402.5 11.3V12.5M407.2 11.3V12.5M412.0 11.3V12.5M416.7 11.3V12.5M421.5 10.5V12.5M426.3 11.3V12.5M431.0 11.3V12.5M435.8 11.3V12.5M440.5 11.3V12.5M450.1 11.3V12.5M454.8 11.3V12.5M459.6 11.3V12.5M464.3 11.3V12.5M469.1 10.5V12.5M473.9 11.3V12.5M478.6 11.3V12.5M483.4 11.3V12.5M488.1 11.3V12.5M497.7 11.3V12.5M502.4 11.3V12.5M507.2 11.3V12.5M511.9 11.3V12.5M516.7 10.5V12.5M521.5 11.3V12.5M526.2 11.3V12.5M531.0 11.3V12.5M535.7 11.3V12.5M545.3 11.3V12.5M550.0 11.3V12.5M554.8 11.3V12.5M559.5 11.3V12.5M564.3 10.5V12.5M569.1 11.3V12.5M573.8 11.3V12.5M578.6 11.3V12.5M583.3 11.3V12.5M592.9 11.3V12.5M597.6 11.3V12.5M602.4 11.3V12.5M607.1 11.3V12.5M611.9 10.5V12.5M616.7 11.3V12.5M621.4 11.3V12.5M626.2 11.3V12.5M630.9 11.3V12.5M640.5 11.3V12.5M645.2 11.3V12.5M650.0 11.3V12.5M654.7 11.3V12.5M659.5 10.5V12.5M664.3 11.3V12.5M669.0 11.3V12.5M673.8 11.3V12.5M678.5 11.3V12.5M688.1 11.3V12.5M692.8 11.3V12.5M697.6 11.3V12.5M702.3 11.3V12.5M707.1 10.5V12.5M711.9 11.3V12.5M716.6 11.3V12.5M721.4 11.3V12.5M726.1 11.3V12.5M735.7 11.3V12.5M740.4 11.3V12.5M745.2 11.3V12.5M749.9 11.3V12.5M754.7 10.5V12.5M759.5 11.3V12.5M764.2 11.3V12.5M769.0 11.3V12.5M773.7 11.3V12.5M783.3 11.3V12.5M788.0 11.3V12.5M792.8 11.3V12.5M797.5 11.3V12.5M802.3 10.5V12.5M807.1 11.3V12.5M811.8 11.3V12.5M816.6 11.3V12.5M821.3 11.3V12.5M830.9 11.3V12.5M835.6 11.3V12.5M840.4 11.3V12.5M845.1 11.3V12.5M849.9 10.5V12.5M854.7 11.3V12.5M859.4 11.3V12.5M864.2 11.3V12.5M868.9 11.3V12.5M878.5 11.3V12.5M883.2 11.3V12.5M888.0 11.3V12.5M892.7 11.3V12.5M897.5 10.5V12.5M902.3 11.3V12.5M907.0 11.3V12.5M911.8 11.3V12.5M916.5 11.3V12.5M926.1 11.3V12.5M930.8 11.3V12.5M935.6 11.3V12.5M940.3 11.3V12.5M945.1 10.5V12.5M949.9 11.3V12.5M954.6 11.3V12.5M959.4 11.3V12.5M964.1 11.3V12.5M973.7 11.3V12.5M978.4 11.3V12.5M983.2 11.3V12.5" stroke="#b9b9b9" stroke-width="1" fill="none"/><path d="M36 12.5H986" stroke="#b4b4b4" stroke-width="1"/></svg>
<div class="rn" style="left:55.0px">50</div><div class="rn" style="left:102.6px">40</div><div class="rn" style="left:150.2px">30</div><div class="rn" style="left:197.8px">20</div><div class="rn" style="left:245.4px">10</div><div class="rn" style="left:293.0px">0</div><div class="rn" style="left:340.6px">10</div><div class="rn" style="left:388.2px">20</div><div class="rn" style="left:435.8px">30</div><div class="rn" style="left:483.4px">40</div><div class="rn" style="left:531.0px">50</div><div class="rn" style="left:578.6px">60</div><div class="rn" style="left:626.2px">70</div><div class="rn" style="left:673.8px">80</div><div class="rn" style="left:721.4px">90</div><div class="rn" style="left:769.0px">100</div><div class="rn" style="left:816.6px">110</div>
<svg class="abs" style="left:23px;top:0" width="14" height="450" viewBox="0 0 14 450"><path d="M8.5 427.0H13M8.5 379.4H13M8.5 331.8H13M8.5 284.2H13M8.5 236.6H13M8.5 189.0H13M8.5 141.4H13" stroke="#9c9c9c" stroke-width="1" fill="none"/><path d="M11.5 446.0H13M11.5 441.3H13M11.5 436.5H13M11.5 431.8H13M11.5 422.2H13M11.5 417.5H13M11.5 412.7H13M11.5 408.0H13M10.5 403.2H13M11.5 398.4H13M11.5 393.7H13M11.5 388.9H13M11.5 384.2H13M11.5 374.6H13M11.5 369.9H13M11.5 365.1H13M11.5 360.4H13M10.5 355.6H13M11.5 350.8H13M11.5 346.1H13M11.5 341.3H13M11.5 336.6H13M11.5 327.0H13M11.5 322.3H13M11.5 317.5H13M11.5 312.8H13M10.5 308.0H13M11.5 303.2H13M11.5 298.5H13M11.5 293.7H13M11.5 289.0H13M11.5 279.4H13M11.5 274.7H13M11.5 269.9H13M11.5 265.2H13M10.5 260.4H13M11.5 255.6H13M11.5 250.9H13M11.5 246.1H13M11.5 241.4H13M11.5 231.8H13M11.5 227.1H13M11.5 222.3H13M11.5 217.6H13M10.5 212.8H13M11.5 208.0H13M11.5 203.3H13M11.5 198.5H13M11.5 193.8H13M11.5 184.2H13M11.5 179.5H13M11.5 174.7H13M11.5 170.0H13M10.5 165.2H13M11.5 160.4H13M11.5 155.7H13M11.5 150.9H13M11.5 146.2H13M11.5 136.6H13M11.5 131.9H13M11.5 127.1H13M11.5 122.4H13M10.5 117.6H13" stroke="#b9b9b9" stroke-width="1" fill="none"/><path d="M13 113V450" stroke="#b4b4b4" stroke-width="1"/></svg>
<div class="vn" style="top:436.0px">0</div><div class="vn" style="top:388.4px">10</div><div class="vn" style="top:340.8px">20</div><div class="vn" style="top:293.2px">30</div><div class="vn" style="top:245.6px">40</div><div class="vn" style="top:198.0px">50</div><div class="vn" style="top:150.4px">60</div>
<svg class="abs" style="left:26px;top:103px" width="9" height="9" viewBox="0 0 9 9"><path d="M1 1.5H5M1.5 1V5M1.8 1.8L7.5 7.5" stroke="#999" stroke-width="1" fill="none"/></svg>
<div class="abs" style="left:24px;top:138px;width:12px;height:1px;background:repeating-linear-gradient(90deg,#444 0 2px,transparent 2px 4px)"></div>

<!-- TOOLBOX_ICONS -->
<!-- pick -->
<div class="abs" style="left:3px;top:89px;width:17px;height:17px;background:#fff;border:1px solid #c9c9c9"></div>
<svg class="abs" style="left:8px;top:91px" width="8" height="13" viewBox="0 0 8 13"><path d="M1 .6V10.4L3.2 8.2L5 12.2L6.6 11.4L4.8 7.6H7.6Z" fill="#111"/></svg>
<svg class="abs" style="left:16px;top:102.0px" width="4.4" height="4.4" viewBox="0 0 3 3"><path d="M3 0V3H0Z" fill="#111"/></svg>
<!-- shape -->
<svg class="abs" style="left:5px;top:113px" width="13" height="14" viewBox="0 0 13 14"><path d="M4 .8 C1.5 3.5 1.5 7 4 10.2" fill="none" stroke="#444" stroke-width="1"/><circle cx="4" cy="3.6" r="1.1" fill="#222"/><path d="M6.2 6.6 L11.6 9.6 L9 10.2 L8.4 12.8 Z" fill="#222"/></svg>
<svg class="abs" style="left:16px;top:124.0px" width="4.4" height="4.4" viewBox="0 0 3 3"><path d="M3 0V3H0Z" fill="#111"/></svg>
<div class="abs" style="left:3px;top:133px;width:17px;height:1px;background:#dcdcdc"></div>
<!-- crop -->
<svg class="abs" style="left:5px;top:140px" width="13" height="13" viewBox="0 0 13 13"><path d="M3.5 .5V9.5H12.5M.5 3.5H9.5V12.5" fill="none" stroke="#222" stroke-width="1.5"/></svg>
<svg class="abs" style="left:16px;top:151.0px" width="4.4" height="4.4" viewBox="0 0 3 3"><path d="M3 0V3H0Z" fill="#111"/></svg>
<!-- zoom -->
<svg class="abs" style="left:5px;top:161px" width="13" height="13" viewBox="0 0 13 13"><circle cx="5.2" cy="5.2" r="4.2" fill="none" stroke="#444" stroke-width="1"/><path d="M8.2 8.2L12 12" stroke="#333" stroke-width="1.6"/></svg>
<svg class="abs" style="left:16px;top:172.0px" width="4.4" height="4.4" viewBox="0 0 3 3"><path d="M3 0V3H0Z" fill="#111"/></svg>
<div class="abs" style="left:3px;top:181px;width:17px;height:1px;background:#dcdcdc"></div>
<!-- freehand -->
<svg class="abs" style="left:5px;top:188px" width="13" height="13" viewBox="0 0 13 13"><path d="M1.6 11.4L11.4 1.6" stroke="#444" stroke-width="1"/><circle cx="1.8" cy="11.2" r="1.3" fill="#222"/><circle cx="11.2" cy="1.8" r="1.3" fill="#222"/><rect x="5.4" y="5.4" width="2.2" height="2.2" fill="#fff" stroke="#333" stroke-width=".7"/></svg>
<svg class="abs" style="left:16px;top:199.0px" width="4.4" height="4.4" viewBox="0 0 3 3"><path d="M3 0V3H0Z" fill="#111"/></svg>
<!-- artistic media -->
<svg class="abs" style="left:5px;top:209px" width="14" height="14" viewBox="0 0 14 14"><path d="M1.2 3.8 C2 1.2 4.8 .6 6 3.2 C7.2 5.8 5.2 8.2 6 10.4 C6.8 12.6 10.4 12.8 12 10.4 C13.2 8.4 12.6 6.4 11 5.4" fill="none" stroke="#333" stroke-width="1.4"/></svg>
<!-- rectangle -->
<svg class="abs" style="left:5px;top:230.6px" width="13" height="13" viewBox="0 0 13 13"><rect x="1.2" y="1" width="10.8" height="10.8" fill="none" stroke="#444" stroke-width="1"/></svg>
<svg class="abs" style="left:16px;top:241.0px" width="4.4" height="4.4" viewBox="0 0 3 3"><path d="M3 0V3H0Z" fill="#111"/></svg>
<!-- ellipse -->
<svg class="abs" style="left:5px;top:251.4px" width="14" height="14" viewBox="0 0 14 14"><circle cx="6.7" cy="6.8" r="5.5" fill="none" stroke="#444" stroke-width="1"/></svg>
<svg class="abs" style="left:16px;top:262.0px" width="4.4" height="4.4" viewBox="0 0 3 3"><path d="M3 0V3H0Z" fill="#111"/></svg>
<!-- polygon -->
<svg class="abs" style="left:5px;top:273px" width="14" height="13" viewBox="0 0 14 13"><path d="M4 1.2H9.6L12.4 6.6L9.6 12H4L1.2 6.6Z" fill="none" stroke="#444" stroke-width="1"/></svg>
<svg class="abs" style="left:16px;top:284.0px" width="4.4" height="4.4" viewBox="0 0 3 3"><path d="M3 0V3H0Z" fill="#111"/></svg>
<div class="abs" style="left:3px;top:293px;width:17px;height:1px;background:#dcdcdc"></div>
<div class="t" style="left:6px;top:301.3px;font-size:11.5px;font-weight:bold;color:#111">字</div>
<div class="abs" style="left:3px;top:320px;width:17px;height:1px;background:#dcdcdc"></div>
<svg class="abs" style="left:16px;top:311.0px" width="4.4" height="4.4" viewBox="0 0 3 3"><path d="M3 0V3H0Z" fill="#111"/></svg>
<!-- dimension -->
<svg class="abs" style="left:5px;top:327px" width="13" height="13" viewBox="0 0 13 13"><path d="M2 11L11 2" stroke="#444" stroke-width="1"/><path d="M.6 9L4 12.4M9 .6L12.4 4" stroke="#444" stroke-width="1"/></svg>
<svg class="abs" style="left:16px;top:338.0px" width="4.4" height="4.4" viewBox="0 0 3 3"><path d="M3 0V3H0Z" fill="#111"/></svg>
<!-- connector -->
<svg class="abs" style="left:5px;top:348px" width="14" height="13" viewBox="0 0 14 13"><path d="M2 2L12 10.5" stroke="#222" stroke-width="1.4"/><rect x=".6" y=".8" width="3.4" height="3.4" fill="#f57a14" stroke="#7a3a08" stroke-width=".5"/><rect x="9" y="8.2" width="3.4" height="3.4" fill="#f57a14" stroke="#7a3a08" stroke-width=".5"/></svg>
<svg class="abs" style="left:16px;top:359.0px" width="4.4" height="4.4" viewBox="0 0 3 3"><path d="M3 0V3H0Z" fill="#111"/></svg>
<div class="abs" style="left:3px;top:368px;width:17px;height:1px;background:#dcdcdc"></div>
<!-- drop shadow -->
<svg class="abs" style="left:5px;top:376px" width="14" height="14" viewBox="0 0 14 14"><rect x="3.5" y="3.5" width="9" height="9" fill="#f1f1f1" stroke="#333" stroke-width="1.2"/><rect x="1" y="1" width="9" height="9" fill="#fff" stroke="#444" stroke-width="1"/></svg>
<svg class="abs" style="left:16px;top:387.0px" width="4.4" height="4.4" viewBox="0 0 3 3"><path d="M3 0V3H0Z" fill="#111"/></svg>
<!-- transparency -->
<svg class="abs" style="left:6px;top:397px" width="12" height="12" viewBox="0 0 12 12"><rect x="0" y="0" width="12" height="12" fill="#222"/><g fill="#fff"><rect x="1" y="1" width="2" height="2"/><rect x="5" y="1" width="2" height="2"/><rect x="9" y="1" width="2" height="2"/><rect x="3" y="3" width="2" height="2"/><rect x="7" y="3" width="2" height="2"/><rect x="1" y="5" width="2" height="2"/><rect x="5" y="5" width="2" height="2"/><rect x="9" y="5" width="2" height="2"/><rect x="3" y="7" width="2" height="2"/><rect x="7" y="7" width="2" height="2"/><rect x="1" y="9" width="2" height="2"/><rect x="5" y="9" width="2" height="2"/><rect x="9" y="9" width="2" height="2"/></g></svg>
<div class="abs" style="left:3px;top:416px;width:17px;height:1px;background:#dcdcdc"></div>
<!-- eyedropper -->
<svg class="abs" style="left:5px;top:424px" width="13" height="13" viewBox="0 0 13 13"><path d="M1.4 11.6L2 9.4L7.4 4L9 5.6L3.6 11Z" fill="#e8763a" stroke="#444" stroke-width=".8"/><path d="M7 2.6L10.4 6M8.4 4.4L10.6 1.6A1.2 1.2 0 0 1 11.8 2.6L9.4 5" stroke="#222" stroke-width="1.6" fill="#222"/></svg>
<svg class="abs" style="left:16px;top:436.0px" width="4.4" height="4.4" viewBox="0 0 3 3"><path d="M3 0V3H0Z" fill="#111"/></svg>
<!-- fill (partial) -->
<svg class="abs" style="left:6px;top:445px" width="12" height="6" viewBox="0 0 12 6"><path d="M1 6L6 1L11 6" fill="none" stroke="#222" stroke-width="1.6"/></svg>


<!-- CANVAS_CONTENT -->
<!-- page shadow -->
<div class="abs" style="left:708px;top:168px;width:4px;height:262px;background:#c1c1c1"></div>
<div class="abs" style="left:306px;top:427px;width:406px;height:3px;background:#c1c1c1"></div>
<!-- page -->
<div class="abs" style="left:302px;top:165px;width:406px;height:262px;background:#fff;border:1px solid #c6c6c6"></div>
<svg class="abs" style="left:400px;top:205px" width="185" height="145" viewBox="400 205 185 145">
<ellipse cx="492.2" cy="277.5" rx="77" ry="59.4" fill="#e60012" stroke="#3a3030" stroke-width="1"/>
<path d="M490.3 275.6L494.1 279.4M494.1 275.6L490.3 279.4" stroke="#8a8a8a" stroke-width="1"/>
<g fill="#000">
<rect x="408" y="211" width="6" height="6"/><rect x="489" y="211" width="6" height="6"/><rect x="570.4" y="211" width="6" height="6"/>
<rect x="408" y="274.4" width="6" height="6"/><rect x="570.4" y="274.4" width="6" height="6"/>
<rect x="408" y="338" width="6" height="6"/><rect x="489" y="338" width="6" height="6"/><rect x="570.4" y="338" width="6" height="6"/>
</g>
<rect x="491" y="216.8" width="2" height="2" fill="#fff" stroke="#555" stroke-width=".5"/>
</svg>
<!-- vertical scrollbar thumb -->
<div class="abs" style="left:973px;top:300px;width:11px;height:97.5px;background:#cdcdcd"></div>


<!-- CONTEXT_MENU -->
<div class="abs" style="left:856px;top:91px;width:129px;height:261px;background:#fff;border:1px solid #c8c8c8"></div>
<div class="abs" style="left:857px;top:92px;width:19px;height:259px;background:#f0f0f0"></div>
<div class="abs" style="left:858px;top:147px;width:125px;height:16px;background:#d9ebfc;border:1px solid #55b0f2"></div>
<div class="cm dis" style="top:96.3px">自动更新</div>
<div class="cm dis" style="top:112.7px">从选定内容添加</div>
<div class="cm dis" style="top:128.8px">从文档添加</div>
<div class="cm" style="top:149.4px">设置轮廓颜色<u>(<b>C</b>)</u></div>
<div class="cm" style="top:165.4px">设置填充色<u>(<b>F</b>)</u></div>
<div class="cm" style="top:186.7px">调色板<u>(<b>P</b>)</u></div>
<div class="cm dis" style="top:207.7px">删除颜色<u>(<b>L</b>)</u></div>
<div class="cm dis" style="top:224.0px">编辑颜色<u>(<b>E</b>)</u></div>
<div class="cm" style="top:245.4px">设为默认值<u>(<b>D</b>)</u></div>
<div class="cm" style="top:261.5px">显示颜色名<u>(<b>N</b>)</u></div>
<div class="cm" style="top:277.6px">滚动到起始处<u>(<b>S</b>)</u></div>
<div class="cm" style="top:293.7px">滚动到结束处<u>(<b>E</b>)</u></div>
<div class="cm" style="top:314.7px">行</div>
<div class="cm" style="top:336.2px">自定义...</div>
<div class="cms" style="top:144px"></div>
<div class="cms" style="top:181.5px"></div>
<div class="cms" style="top:203px"></div>
<div class="cms" style="top:240px"></div>
<div class="cms" style="top:309px"></div>
<div class="cms" style="top:331px"></div>

<svg class="abs" style="left:862px;top:98px" width="9" height="8" viewBox="0 0 9 8"><path d="M.9 4L3.3 6.6L8 1.2" fill="none" stroke="#adadad" stroke-width="1.7"/></svg>
<svg class="abs" style="left:862px;top:247px" width="9" height="8" viewBox="0 0 9 8"><path d="M.9 4L3.3 6.6L8 1.2" fill="none" stroke="#111" stroke-width="1.9"/></svg>
<svg class="abs" style="left:975.5px;top:189px" width="4" height="6" viewBox="0 0 4 6"><path d="M.3 .3V5.7L3.6 3Z" fill="#111"/></svg>
<svg class="abs" style="left:975.5px;top:317.5px" width="4" height="6" viewBox="0 0 4 6"><path d="M.3 .3V5.7L3.6 3Z" fill="#111"/></svg>
<svg class="abs" style="left:868px;top:130px" width="108" height="46" viewBox="868 130 108 46"><path fill-rule="evenodd" fill="#000" d="M874.1 153.6A47.35 17.3 0 1 0 968.8000000000001 153.6A47.35 17.3 0 1 0 874.1 153.6ZM878.7 153.5A42.9 14.7 0 1 0 964.5 153.5A42.9 14.7 0 1 0 878.7 153.5Z"/></svg>


<!-- PALETTE -->
<div class="abs" style="left:985px;top:86px;width:15px;height:364px;background:#ececec"></div>
<div class="abs" style="left:986px;top:86.5px;width:13px;height:4.5px;background:conic-gradient(#fafafa 25%,#cfcfcf 0 50%,#fafafa 0 75%,#cfcfcf 0) 0 0/2.4px 2.4px"></div>
<div class="abs" style="left:986px;top:92px;width:13px;height:13.5px;background:#e0eefb;border:1px solid #62bdf5"></div>
<svg class="abs" style="left:990.5px;top:95.5px" width="4" height="6" viewBox="0 0 4 6"><path d="M.3 .2V5.8L3.7 3Z" fill="#111"/></svg>
<svg class="abs" style="left:987px;top:107px" width="12" height="12" viewBox="0 0 12 12"><path d="M1.2 10.8L1.8 8.8L7 3.6L8.4 5L3.2 10.2Z" fill="#c9c9c9"/><path d="M7 2.4L9.6 5M8 3.6L9.8 1.6A1 1 0 0 1 10.6 2.4L8.8 4.2" stroke="#bcbcbc" stroke-width="1.4" fill="#bcbcbc"/></svg>
<svg class="abs" style="left:988px;top:122px" width="10" height="6" viewBox="0 0 10 6"><path d="M1 5L5 1L9 5" fill="none" stroke="#c4c4c4" stroke-width="1.1"/></svg>
<div class="sw first" style="top:133.40px;height:12.5px;background:#e60012"></div>
<div class="sw" style="top:145.85px;height:12.5px;background:#e4007f"></div>
<div class="sw" style="top:158.30px;height:12.5px;background:#a9377e"></div>
<div class="sw" style="top:170.75px;height:12.5px;background:#f08300"></div>
<div class="sw" style="top:183.20px;height:12.5px;background:#f5b4b4"></div>
<div class="sw" style="top:195.65px;height:12.5px;background:#8a7268"></div>
<div class="sw" style="top:208.10px;height:12.5px;background:#d3cfe9"></div>
<div class="sw" style="top:220.55px;height:12.5px;background:#a69acb"></div>
<div class="sw" style="top:233.00px;height:12.5px;background:#6c8bc9"></div>
<div class="sw" style="top:245.45px;height:12.5px;background:#7565ae"></div>
<div class="sw" style="top:257.90px;height:12.5px;background:#8d82b0"></div>
<div class="sw" style="top:270.35px;height:12.5px;background:#4b6197"></div>
<div class="sw" style="top:282.80px;height:12.5px;background:#5a5072"></div>
<div class="sw" style="top:295.25px;height:12.5px;background:#7285a5"></div>
<div class="sw" style="top:307.70px;height:12.5px;background:#0a8ed6"></div>
<div class="sw" style="top:320.15px;height:12.5px;background:#a6d9f6"></div>
<div class="sw" style="top:332.60px;height:12.5px;background:#b8cedc"></div>
<div class="sw" style="top:345.05px;height:12.5px;background:#9aabb5"></div>
<div class="sw" style="top:357.50px;height:12.5px;background:#6d7c86"></div>
<div class="sw" style="top:369.95px;height:12.5px;background:#4a525a"></div>
<div class="sw" style="top:382.40px;height:12.5px;background:#4d7372"></div>
<div class="sw" style="top:394.85px;height:12.5px;background:#3f8b7c"></div>
<div class="sw" style="top:407.30px;height:12.5px;background:#6f9d99"></div>
<div class="sw" style="top:419.75px;height:12.5px;background:#53a995"></div>
<div class="sw" style="top:432.20px;height:12.5px;background:#59a86c"></div>
<div class="sw" style="top:444.65px;height:12.5px;background:#5bc4d9"></div>


</body>
</html>
